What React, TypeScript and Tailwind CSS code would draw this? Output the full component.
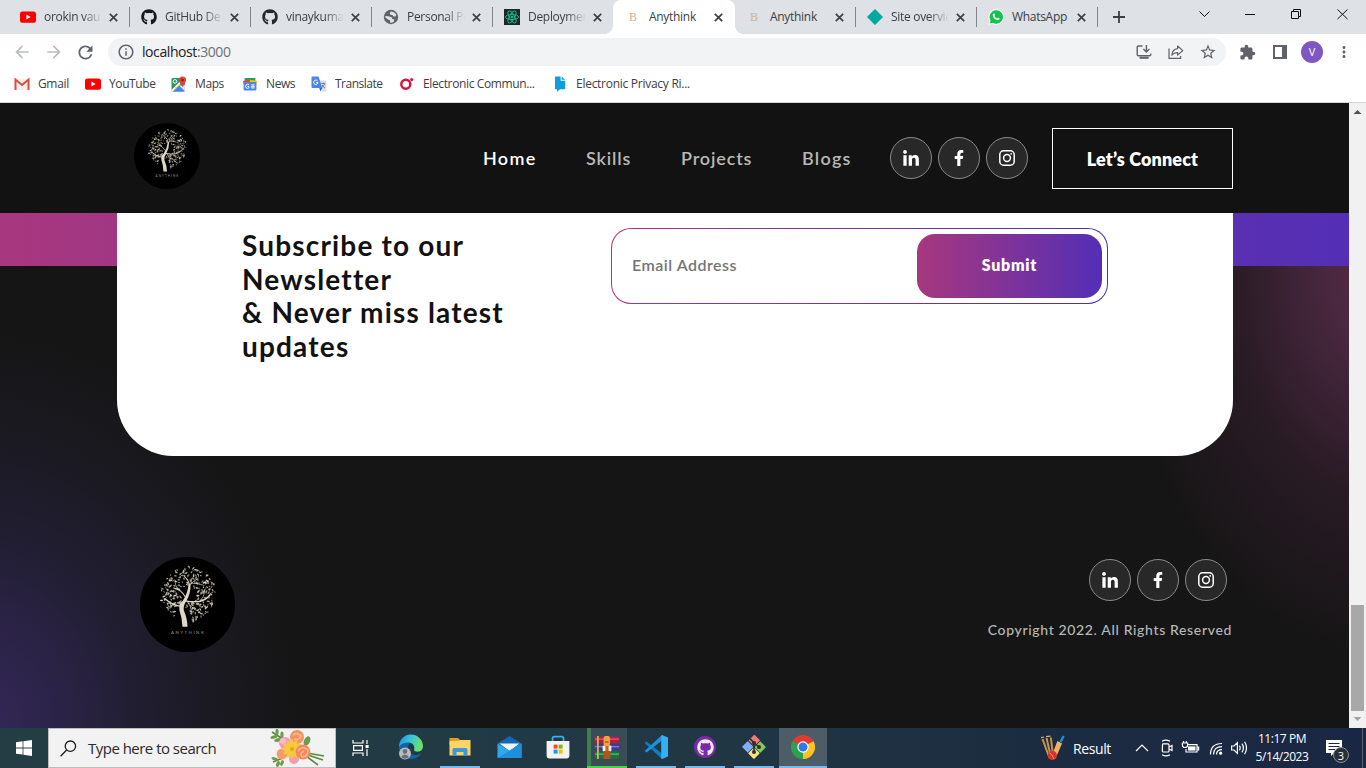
import React from "react";
import { FaGithub, FaLinkedinIn, FaFacebookF } from "react-icons/fa";
import {
  MdArrowBack,
  MdArrowForward,
  MdRefresh,
  MdInfoOutline,
  MdStarBorder,
  MdExtension,
  MdMoreVert,
} from "react-icons/md";

/* ---------- favicons and small brand marks ---------- */

const YouTubeIcon = () => (
  <svg width="16" height="16" viewBox="0 0 16 16">
    <rect x="0" y="2.4" width="16" height="11.4" rx="2.6" fill="#f00" />
    <path d="M6.4 5.6 L10.6 8.1 L6.4 10.6 Z" fill="#fff" />
  </svg>
);

const GlobeFavicon = () => (
  <svg width="16" height="16" viewBox="0 0 16 16">
    <circle cx="8" cy="8" r="7.2" fill="#5f6368" />
    <path d="M7.6 2.6 Q11 2.4 13.4 5.4 L12.6 7.4 H10.6 L9.4 6 L7.4 5.8 L6.8 4.4 Z" fill="#dee1e6" />
    <path d="M2.2 7 L5.4 7.2 L8.6 8.2 L9.4 10 L11.4 10.6 L10.6 13 Q8.6 14 7 13.6 L7.2 11.4 L5 10.6 L2.4 8.6 Z" fill="#dee1e6" />
  </svg>
);

const ReactFavicon = () => (
  <svg width="16" height="16" viewBox="0 0 16 16">
    <rect width="16" height="16" fill="#20232a" />
    <g fill="none" stroke="#12b886" strokeWidth="1">
      <ellipse cx="8" cy="8" rx="6.6" ry="2.6" />
      <ellipse cx="8" cy="8" rx="6.6" ry="2.6" transform="rotate(60 8 8)" />
      <ellipse cx="8" cy="8" rx="6.6" ry="2.6" transform="rotate(120 8 8)" />
    </g>
    <circle cx="8" cy="8" r="1.5" fill="#12b886" />
  </svg>
);

const LetterFavicon = () => (
  <span className="flex h-4 w-4 items-center justify-center font-['Liberation_Serif',serif] text-[12px] leading-none text-[#cfb58c]">
    B
  </span>
);

const DiamondFavicon = () => (
  <svg width="16" height="16" viewBox="0 0 16 16">
    <path d="M8 0.3 L15.7 8 L8 15.7 L0.3 8 Z" fill="#05a8a1" strokeLinejoin="round" stroke="#05a8a1" strokeWidth="0.6" />
  </svg>
);

const WhatsAppFavicon = () => (
  <svg width="16" height="16" viewBox="0 0 16 16">
    <path d="M0.3 15.8 L1.5 11.8 A7.8 7.8 0 1 1 4.4 14.7 Z" fill="#fff" />
    <path d="M1.6 14.6 L2.5 11.4 A6.7 6.7 0 1 1 4.8 13.7 Z" fill="#10c44c" />
    <path d="M5.5 4.4 L6.5 4.4 L7.1 6 L6.5 6.9 Q7.3 8.5 9.2 9.4 L10 8.6 L11.6 9.4 Q11.7 11 9.8 11.2 Q5.2 10.4 4.7 6 Q4.7 5 5.5 4.4 Z" fill="#fff" />
  </svg>
);

const GmailIcon = () => (
  <svg width="16" height="16" viewBox="0 0 16 16">
    <rect x="1" y="3" width="14" height="11" fill="#f3f0f0" />
    <path d="M1.5 14 V3.6 L8 9 L14.5 3.6 V14" fill="none" stroke="#dd4b3e" strokeWidth="2" />
  </svg>
);

const MapsIcon = () => (
  <svg width="16" height="16" viewBox="0 0 16 16">
    <rect x="0.5" y="2" width="13.5" height="13.5" rx="1.5" fill="#2a9d59" />
    <path d="M2 15.5 L8 9.5 L14 15.5 Z" fill="#4285f4" />
    <path d="M0.8 15 L13 3" stroke="#fff" strokeWidth="2" />
    <path d="M2 15.3 L12.5 4.8" stroke="#fbc02d" strokeWidth="0.9" />
    <path d="M8 9.4 L14 15.4 V9 Z" fill="#dfe3e8" />
    <circle cx="4" cy="5.4" r="1.8" fill="none" stroke="#fff" strokeWidth="1" />
    <path d="M11.5 0.4 A3.6 3.6 0 0 1 15.1 4 Q15.1 6 11.5 11 Q7.9 6 7.9 4 A3.6 3.6 0 0 1 11.5 0.4 Z" fill="#e24335" />
    <circle cx="11.5" cy="4" r="1.3" fill="#7f1f17" />
  </svg>
);

const NewsIcon = () => (
  <svg width="16" height="16" viewBox="0 0 16 16">
    <path d="M2.6 2 H13.4 V7 H2.6 Z" fill="#20a25b" />
    <path d="M0.8 5 L9 3.4 V9 H2 Z" fill="#ea4335" />
    <path d="M15.2 5 L8 3.8 V9 H14 Z" fill="#fbbc04" />
    <rect x="1.6" y="6" width="12.8" height="8.6" rx="1" fill="#4a86ee" />
    <path d="M7 8.9 A2 2 0 1 0 7 11.7 V10.5 H5.6 M9.2 8.9 H12.6 M9.2 10.4 H12.6 M9.2 11.9 H12.6" fill="none" stroke="#fff" strokeWidth="1" />
  </svg>
);

const TranslateIcon = () => (
  <svg width="16" height="16" viewBox="0 0 16 16">
    <path d="M6 4.5 H14.5 Q15.4 4.5 15.4 5.4 V14.4 Q15.4 15.4 14.4 15.4 H9.4 Z" fill="#dadce0" />
    <path d="M1.2 0.6 H7.6 L11.2 12 H1.6 Q0.5 12 0.5 11 V1.4 Q0.5 0.6 1.2 0.6 Z" fill="#4a86ee" />
    <path d="M8.4 12 H11.2 L9.4 15.2 Z" fill="#2a5dc8" />
    <path d="M6.6 5 A2.2 2.2 0 1 0 7 6.6 H5" fill="none" stroke="#fff" strokeWidth="1" />
    <path d="M10.2 7.6 H14.4 M12.3 6.6 V7.6 M13.6 7.8 Q13 10.4 10.8 11.6 M11.2 9 Q12 11 13.8 11.8" fill="none" stroke="#6b7785" strokeWidth="0.9" />
  </svg>
);

const RedRingIcon = () => (
  <svg width="16" height="16" viewBox="0 0 16 16">
    <circle cx="6.8" cy="8.2" r="4.5" fill="none" stroke="#d9123c" strokeWidth="2.5" />
    <circle cx="12.7" cy="3.6" r="1.6" fill="#d9123c" />
  </svg>
);

const BluePageIcon = () => (
  <svg width="16" height="16" viewBox="0 0 16 16">
    <path d="M3 0.4 H8.6 V4.8 H13.2 V13.2 H8 L5 15.8 V13.2 H3 Z" fill="#0d9edb" />
    <path d="M9.6 0.4 L13.2 3.8 H9.6 Z" fill="#0d9edb" />
  </svg>
);

/* ---------- browser chrome ---------- */

const CloseX = () => (
  <svg className="shrink-0" width="9" height="9" viewBox="0 0 9 9">
    <path d="M0.8 0.8 L8.2 8.2 M8.2 0.8 L0.8 8.2" stroke="#3c4043" strokeWidth="1.7" />
  </svg>
);

const tabs: { title: string; icon: React.ReactNode; active?: boolean; sep?: boolean; fade?: boolean }[] = [
  { title: "orokin vau", icon: <YouTubeIcon />, sep: true, fade: true },
  { title: "GitHub De", icon: <FaGithub size={16} color="#16191d" />, sep: true, fade: true },
  { title: "vinaykuma", icon: <FaGithub size={16} color="#24292f" />, sep: true, fade: true },
  { title: "Personal Po", icon: <GlobeFavicon />, sep: true, fade: true },
  { title: "Deploymen", icon: <ReactFavicon />, fade: true },
  { title: "Anythink", icon: <LetterFavicon />, active: true },
  { title: "Anythink", icon: <LetterFavicon />, sep: true },
  { title: "Site overvie", icon: <DiamondFavicon />, sep: true, fade: true },
  { title: "WhatsApp", icon: <WhatsAppFavicon />, sep: true },
];

const TabStrip = () => (
  <div className="flex h-[34px] shrink-0 bg-[#dee1e6] pl-2">
    {tabs.map((t, i) => (
      <div
        key={i}
        className={
          t.active
            ? "relative -mr-px flex h-[34px] w-[122px] shrink-0 items-center rounded-t-lg bg-white pl-3"
            : "relative flex h-[34px] w-[121px] shrink-0 items-center pl-3"
        }
      >
        <span className="flex w-4 shrink-0 justify-center">{t.icon}</span>
        <span
          className={
            t.fade
              ? "ml-2 w-[58px] whitespace-nowrap text-[12px] tracking-[-0.3px] text-[#3c4043] [mask-image:linear-gradient(to_right,#000_66%,transparent)]"
              : "ml-2 w-[58px] whitespace-nowrap text-[12px] tracking-[-0.3px] text-[#3c4043]"
          }
        >
          {t.title}
        </span>
        <span className="ml-[7px] flex">
          <CloseX />
        </span>
        {t.sep && <span className="absolute right-[-1px] top-[7px] h-5 w-px bg-[#80868b]" />}
        {t.active && (
          <>
            <span className="absolute bottom-0 left-[-8px] h-2 w-2 bg-[radial-gradient(circle_at_0_0,transparent_7.5px,#fff_8px)]" />
            <span className="absolute bottom-0 right-[-8px] h-2 w-2 bg-[radial-gradient(circle_at_100%_0,transparent_7.5px,#fff_8px)]" />
          </>
        )}
      </div>
    ))}
    <div className="flex flex-1 items-center pl-[16px]">
      <svg width="12" height="12" viewBox="0 0 12 12">
        <path d="M6 0 V12 M0 6 H12" stroke="#3c4043" strokeWidth="1.8" />
      </svg>
      <svg className="mb-[6px] ml-auto mr-[6px]" width="161" height="12" viewBox="0 0 161 12" fill="none" stroke="#111" strokeWidth="1">
        <path d="M0.5 3.5 L5.5 8.5 L10.5 3.5" />
        <path d="M46 6.5 H56" />
        <path d="M92.5 3.5 H99.5 V10.5 H92.5 Z M94.5 3.5 V1.5 H101.5 V8.5 H99.5" />
        <path d="M138.5 1.5 L148.5 11 M148.5 1.5 L138.5 11" />
      </svg>
    </div>
  </div>
);

const Toolbar = () => (
  <div className="flex h-9 shrink-0 items-center bg-white">
    <div className="flex w-[108px] items-center gap-3 pl-3">
      <MdArrowBack size={20} color="#babcbe" />
      <MdArrowForward size={20} color="#babcbe" />
      <MdRefresh size={21} color="#5f6368" className="-ml-px" />
    </div>
    <div className="flex h-7 w-[1118px] items-center rounded-full bg-[#f1f3f4] pl-[9px] pr-[9px]">
      <MdInfoOutline size={18} color="#5f6368" />
      <span className="-mt-px ml-[7px] text-[14px] tracking-[-0.42px] text-[#202124]">
        localhost<span className="text-[#6b7075]">:3000</span>
      </span>
      <div className="ml-auto flex items-center gap-4 text-[#5f6368]">
        <svg width="16" height="16" viewBox="0 0 16 16" fill="none" stroke="currentColor" strokeWidth="1.4">
          <path d="M6.5 2 H2.4 Q1.2 2 1.2 3.2 V10.6 Q1.2 11.8 2.4 11.8 H13.6 Q14.8 11.8 14.8 10.6 V9.4" />
          <path d="M10.4 1 V7.6 M7.4 5 L10.4 8 L13.4 5" />
          <path d="M3.6 13.8 H12.6" strokeWidth="2" />
        </svg>
        <svg width="16" height="16" viewBox="0 0 16 16" fill="none" stroke="currentColor" strokeWidth="1.2">
          <path d="M1 4.5 V14.4 H12.6 V12" />
          <path d="M9.6 2 L14.8 6.6 L9.6 11 V8.6 Q6 8.4 3.8 11.2 Q4.4 5.2 9.6 4.6 Z" strokeLinejoin="round" />
        </svg>
        <MdStarBorder size={18} className="-ml-[1px]" />
      </div>
    </div>
    <div className="flex items-center pl-[13px] text-[#5f6368]">
      <MdExtension size={17} />
      <svg className="ml-[17px]" width="14" height="14" viewBox="0 0 14 14">
        <path d="M0 0 H14 V14 H0 Z M2 2 V12 H9 V2 Z" fill="#5f6368" fillRule="evenodd" />
      </svg>
      <span className="ml-[14px] flex h-[22px] w-[22px] items-center justify-center rounded-full bg-[#7e57c2] text-[11px] text-white">V</span>
      <MdMoreVert size={18} className="ml-3" />
    </div>
  </div>
);

const bookmarks: { label: string; icon: React.ReactNode; cls: string }[] = [
  { label: "Gmail", icon: <GmailIcon />, cls: "w-[71px] tracking-[-0.35px]" },
  { label: "YouTube", icon: <YouTubeIcon />, cls: "w-[87px] tracking-[-0.4px]" },
  { label: "Maps", icon: <MapsIcon />, cls: "w-[70px] -ml-px mr-px tracking-[-0.4px]" },
  { label: "News", icon: <NewsIcon />, cls: "w-[69px] tracking-[-0.4px]" },
  { label: "Translate", icon: <TranslateIcon />, cls: "w-[88px] tracking-[-0.5px]" },
  { label: "Electronic Commun...", icon: <RedRingIcon />, cls: "w-[153px] tracking-[-0.37px]" },
  { label: "Electronic Privacy Ri...", icon: <BluePageIcon />, cls: "w-[153px] tracking-[-0.27px]" },
];

const BookmarksBar = () => (
  <div className="flex h-[33px] shrink-0 items-center border-b border-[#d5d7da] bg-white pb-1 pl-[14px]">
    {bookmarks.map((b) => (
      <div key={b.label} className={"flex shrink-0 items-center gap-2 whitespace-nowrap text-[12px] text-[#3c4043] " + b.cls}>
        {b.icon}
        <span>{b.label}</span>
      </div>
    ))}
  </div>
);

/* ---------- site ---------- */

const leaves = (() => {
  let seed = 11;
  const rnd = () => {
    seed = (seed * 16807) % 2147483647;
    return seed / 2147483647;
  };
  const out: { x: number; y: number; a: number; s: number; o: number }[] = [];
  /* golden-angle spread keeps the crown evenly filled */
  for (let k = 30; k < 300; k++) {
    const ang = k * 2.39996 + rnd() * 0.5;
    const r = Math.sqrt(k / 300) * 80 + (rnd() - 0.5) * 6;
    const x = 143 + Math.cos(ang) * r;
    const y = 110 + Math.sin(ang) * r;
    if (y > 150 && x > 104 && x < 150) continue;
    out.push({ x, y, a: rnd() * 180, s: 1.5 + rnd() * 1.5, o: 0.5 + rnd() * 0.45 });
  }
  return out;
})();

const TreeLogo = ({ size }: { size: number }) => (
  <svg width={size} height={size} viewBox="0 0 282 282" className="shrink-0">
    <circle cx="141" cy="141" r="141" fill="#000" />
    <g fill="#e0d7c5">
      {leaves.map((l, i) => (
        <ellipse key={i} cx={l.x} cy={l.y} rx={l.s * 1.7} ry={l.s * 0.85} opacity={l.o} transform={`rotate(${l.a} ${l.x} ${l.y})`} />
      ))}
      <path d="M126 207 Q125 180 117 158 Q114 140 127 130 Q142 108 144 82 L150 82 Q151 108 138 130 Q128 144 130 158 Q141 184 141 207 Z" />
    </g>
    <g fill="none" stroke="#e0d7c5" strokeLinecap="round">
      <path d="M147 84 Q145 68 132 58" strokeWidth="3" />
      <path d="M148 84 Q156 72 172 64" strokeWidth="2.4" />
      <path d="M119 146 Q98 144 74 124" strokeWidth="4" />
      <path d="M134 118 Q124 98 100 92" strokeWidth="3" />
      <path d="M134 130 Q156 134 176 132 Q196 128 208 112" strokeWidth="4" />
      <path d="M140 132 Q150 152 176 162 M148 142 Q154 156 152 168" strokeWidth="2.2" />
      <path d="M180 130 Q188 118 192 106 M98 142 Q88 146 80 150 M112 94 Q104 84 104 74 M150 78 Q168 76 190 84" strokeWidth="1.8" />
    </g>
    <text x="143" y="229" textAnchor="middle" fill="#9d968a" fontSize="13" letterSpacing="4.4" fontFamily="Lato, sans-serif">
      ANYTHINK
    </text>
  </svg>
);

const InstagramGlyph = () => (
  <svg width="16" height="16" viewBox="0 0 16 16" fill="none" stroke="#fff" strokeWidth="1.5">
    <rect x="0.8" y="0.8" width="14.4" height="14.4" rx="3.8" />
    <circle cx="8" cy="8" r="3.4" />
    <circle cx="12.2" cy="3.8" r="0.9" fill="#fff" stroke="none" />
  </svg>
);

const Socials = () => (
  <div className="flex gap-[6px]">
    <a className="flex h-[42px] w-[42px] items-center justify-center rounded-full border border-[#8a8a8a] bg-[#282828]">
      <FaLinkedinIn size={18} color="#fff" className="mt-px" />
    </a>
    <a className="flex h-[42px] w-[42px] items-center justify-center rounded-full border border-[#8a8a8a] bg-[#282828]">
      <FaFacebookF size={16} color="#fff" />
    </a>
    <a className="flex h-[42px] w-[42px] items-center justify-center rounded-full border border-[#8a8a8a] bg-[#282828]">
      <InstagramGlyph />
    </a>
  </div>
);

const SiteHeader = () => (
  <header className="flex h-[110px] items-center bg-[#121212] pl-[134px] pr-[116px] font-['Lato',sans-serif]">
    <div className="-mt-1">
      <TreeLogo size={66} />
    </div>
    <nav className="ml-[283px] flex h-[30px] items-center whitespace-nowrap text-[18px] font-semibold tracking-[0.85px] text-[#b8b8b8]">
      <a className="w-[103px] tracking-[1.3px] text-white">Home</a>
      <a className="w-[95px]">Skills</a>
      <a className="w-[121px]">Projects</a>
      <a className="w-[88px] tracking-[1.25px]">Blogs</a>
    </nav>
    <Socials />
    <button className="ml-6 h-[61px] w-[181px] border border-white pt-0.5 text-[18px] font-extrabold tracking-[0.15px] text-white">Let’s Connect</button>
  </header>
);

const Page = () => (
  <div className="flex min-w-0 flex-1 flex-col overflow-hidden font-['Lato',sans-serif]">
    <SiteHeader />
    <main className="flex flex-1 flex-col bg-[#151515] bg-[linear-gradient(90deg,#a8377e,#532fb6),radial-gradient(ellipse_320px_400px_at_-20px_515px,#33285a_0%,#2b2346_26%,#211e32_48%,#1b1a22_72%,#151515_100%),radial-gradient(ellipse_270px_390px_at_1385px_60px,#552c46_0%,#4a2840_20%,#281b24_58%,rgba(21,21,21,0)_100%)] bg-[length:100%_53px,320px_100%,100%_100%] bg-no-repeat px-[117px]">
      <section className="flex h-[243px] w-[1116px] shrink-0 items-start rounded-b-[56px] bg-white pl-[125px] pt-[15px]">
        <h3 className="w-[369px] whitespace-nowrap pt-px text-[28px] font-bold leading-[33.6px] tracking-[1.17px] text-[#121212]">
          Subscribe to our
          <br />
          Newsletter
          <br />
          &amp; Never miss latest
          <br />
          updates
        </h3>
        <div className="h-[76px] w-[497px] rounded-[20px] bg-[linear-gradient(90deg,#aa367c,#4a2fbd)] p-px">
          <form className="flex h-full items-center rounded-[19px] bg-white pl-5 pr-[5px]">
            <input
              className="-mt-0.5 w-[285px] bg-transparent text-[16px] font-semibold tracking-[0.5px] text-[#121212] outline-none placeholder:text-[#757575]"
              placeholder="Email Address"
            />
            <button
              type="button"
              className="h-16 w-[185px] rounded-[18px] bg-[linear-gradient(90deg,#a8377e,#532fb6)] pb-0.5 text-[16px] font-extrabold tracking-[0.7px] text-white"
            >
              Submit
            </button>
          </form>
        </div>
      </section>
      <footer className="flex items-start justify-between pt-[101px]">
        <div className="ml-[23px]">
          <TreeLogo size={95} />
        </div>
        <div className="flex flex-col items-end pt-[2px]">
          <div className="mr-[5px]">
            <Socials />
          </div>
          <p className="mt-[19px] whitespace-nowrap text-[14px] font-medium leading-5 tracking-[0.65px] text-[#b8b8b8]">
            Copyright 2022. All Rights Reserved
          </p>
        </div>
      </footer>
    </main>
  </div>
);

const Scrollbar = () => (
  <div className="flex w-[17px] shrink-0 flex-col items-center bg-[#f1f1f1]">
    <svg width="17" height="17" viewBox="0 0 17 17">
      <path d="M4.5 11 L8.5 7 L12.5 11 Z" fill="#505050" />
    </svg>
    <div className="mt-auto h-[106px] w-[13px] bg-[#a8a8a8]" />
    <svg width="17" height="17" viewBox="0 0 17 17">
      <path d="M4.5 6 L8.5 10 L12.5 6 Z" fill="#a3a3a3" />
    </svg>
  </div>
);

/* ---------- taskbar ---------- */

const FlowersArt = () => (
  <svg width="56" height="38" viewBox="0 0 56 38">
    <g stroke="#5b8a3c" strokeWidth="1.6" fill="none">
      <path d="M2 3 L16 12 M38 26 L53 31 M37 24 L54 27 M36 27 L48 36 M3 33 L15 28" />
    </g>
    <g fill="#6f9b4c">
      <ellipse cx="4" cy="8" rx="3.6" ry="1.6" transform="rotate(-15 4 8)" />
      <ellipse cx="7" cy="3" rx="1.6" ry="3.4" />
      <ellipse cx="8" cy="11" rx="3.8" ry="1.7" transform="rotate(-15 8 11)" />
      <ellipse cx="12" cy="6" rx="1.6" ry="3.4" />
      <ellipse cx="5" cy="30" rx="3.6" ry="1.6" transform="rotate(20 5 30)" />
      <ellipse cx="8" cy="35" rx="1.8" ry="3" transform="rotate(20 8 35)" />
      <ellipse cx="12" cy="34" rx="1.6" ry="3" transform="rotate(20 12 34)" />
      <ellipse cx="37" cy="12" rx="3" ry="5" transform="rotate(25 37 12)" />
    </g>
    <circle cx="15" cy="14" r="6" fill="#f49ab5" />
    <circle cx="13" cy="12" r="3" fill="#fabccd" />
    <circle cx="27" cy="8" r="7" fill="#f5925f" />
    <path d="M23 6 Q27 3 31 7 Q29 12 24 10" fill="none" stroke="#fbb68d" strokeWidth="1.8" />
    <circle cx="12" cy="25" r="5.4" fill="#f79a6c" />
    <circle cx="24" cy="30" r="5" fill="#f49ab5" />
    <g fill="#f7c93d">
      <ellipse cx="22" cy="20" rx="10" ry="2.4" />
      <ellipse cx="22" cy="20" rx="10" ry="2.4" transform="rotate(30 22 20)" />
      <ellipse cx="22" cy="20" rx="10" ry="2.4" transform="rotate(60 22 20)" />
      <ellipse cx="22" cy="20" rx="10" ry="2.4" transform="rotate(90 22 20)" />
      <ellipse cx="22" cy="20" rx="10" ry="2.4" transform="rotate(120 22 20)" />
      <ellipse cx="22" cy="20" rx="10" ry="2.4" transform="rotate(150 22 20)" />
    </g>
    <circle cx="22" cy="20" r="2" fill="#dfa522" />
    <circle cx="33" cy="23" r="7.4" fill="#f5875a" />
    <path d="M28 22 Q32 16 38 21 Q38 28 32 28 Q29 24 34 22" fill="none" stroke="#fbb992" strokeWidth="1.6" />
  </svg>
);

const TaskViewIcon = () => (
  <svg width="18" height="18" viewBox="0 0 18 18" fill="none" stroke="#fff" strokeWidth="1.2">
    <path d="M1 1 V4 H11 V1 M1 17 V14 H11 V17 M1.6 6.6 H10.4 V11.4 H1.6 Z M15 1 V5 M15 10 V17" />
    <rect x="13.6" y="6" width="3" height="3" fill="#fff" stroke="none" />
  </svg>
);

const EdgeIcon = () => (
  <svg width="26" height="26" viewBox="0 0 26 26">
    <defs>
      <linearGradient id="edgeTop" x1="0" y1="0" x2="1" y2="0.3">
        <stop offset="0" stopColor="#1b8fd6" />
        <stop offset="0.5" stopColor="#36c3dc" />
        <stop offset="1" stopColor="#6be06a" />
      </linearGradient>
    </defs>
    <path d="M1 13 Q5 6 12 8.6 Q9 12 10.6 16.6 Q13.6 21.8 19 21 Q22 20.6 23.8 18.6 Q20 25.4 13 25 A12 12 0 0 1 1 13 Z" fill="#1263ad" />
    <path d="M1 13 A12 12 0 0 1 25 12 Q25 18 18.5 17.6 Q15 17 16.4 14 Q16 9 10.5 8.6 Q4 8.6 1 13 Z" fill="url(#edgeTop)" />
    <circle cx="7" cy="19.4" r="6" fill="#b9bcc0" />
    <circle cx="7" cy="17.4" r="2.3" fill="#6d6f73" />
    <path d="M3 23 Q7 18.2 11 23 Q7 26.4 3 23 Z" fill="#6d6f73" />
  </svg>
);

const ExplorerIcon = () => (
  <svg width="22" height="20" viewBox="0 0 22 20">
    <path d="M0.5 1 H9 L11 3 H21 V8 H0.5 Z" fill="#e0a21c" />
    <path d="M0.5 4 H8.5 L10.5 3 H21.5 V18.5 H0.5 Z" fill="#fbd465" />
    <path d="M3.5 19 V12.5 Q3.5 11 5 11 H17 Q18.5 11 18.5 12.5 V19 H14.5 V15 H7.5 V19 Z" fill="#3f97d8" />
  </svg>
);

const MailIcon = () => (
  <svg width="25" height="24" viewBox="0 0 25 24">
    <path d="M0.5 8.5 L12.5 1 L24.5 8.5 L12.5 16 Z" fill="#1267b8" />
    <path d="M2.5 8.5 H22.5 L12.5 16 Z" fill="#f1f4f7" />
    <path d="M0.5 8.5 L12.5 15.5 L24.5 8.5 V23 H0.5 Z" fill="#2fa8ea" />
    <path d="M0.5 23 L24.5 8.5 V23 Z" fill="#1f8fdc" />
  </svg>
);

const StoreIcon = () => (
  <svg width="24" height="24" viewBox="0 0 24 24">
    <path d="M6.5 7 V3.4 Q6.5 1.6 8.3 1.6 H15.7 Q17.5 1.6 17.5 3.4 V7" fill="none" stroke="#2fb4ec" strokeWidth="1.7" />
    <path d="M0.6 6 H23.4 V20.6 Q23.4 23.6 20.4 23.6 H3.6 Q0.6 23.6 0.6 20.6 Z" fill="#f3f3f3" />
    <rect x="7.6" y="9.6" width="4" height="4" fill="#f25022" />
    <rect x="12.6" y="9.6" width="4" height="4" fill="#7fba00" />
    <rect x="7.6" y="14.6" width="4" height="4" fill="#00a4ef" />
    <rect x="12.6" y="14.6" width="4" height="4" fill="#ffb900" />
  </svg>
);

const WinRarIcon = () => (
  <svg width="24" height="23" viewBox="0 0 24 23">
    <rect y="0.5" width="24" height="7" rx="1" fill="#b01f45" />
    <rect y="2.4" width="24" height="1.4" fill="#e0557a" />
    <rect y="8.3" width="24" height="6.4" rx="1" fill="#3f3d92" />
    <rect y="10" width="24" height="1.3" fill="#7f7ed6" />
    <rect y="15.5" width="24" height="7" rx="1" fill="#17763a" />
    <rect y="17.4" width="24" height="1.4" fill="#4fb472" />
    <rect x="2" width="1.8" height="23" fill="#d8b23e" />
    <rect x="7.6" y="9.6" width="8.8" height="6" rx="1" fill="#f1f1f1" />
    <rect x="8.6" y="0" width="6.4" height="10" rx="2" fill="#eda637" />
    <rect x="10" y="5" width="3.6" height="2" fill="#c46d1c" />
    <rect x="10.4" y="10" width="3.2" height="5" fill="#c9651f" />
    <rect x="8.6" y="15" width="6.8" height="8" fill="#b4521e" />
  </svg>
);

const VSCodeIcon = () => (
  <svg width="24" height="24" viewBox="0 0 24 24">
    <path d="M0.6 8 L2.6 6.6 L18 18.4 V24 Z" fill="#0c7dc4" />
    <path d="M0.6 16 L2.6 17.4 L18 5.6 V0 Z" fill="#1b93dc" />
    <path d="M18 0 L24 2.6 V21.4 L18 24 Q17.2 23.6 17.2 22.6 V1.4 Q17.2 0.4 18 0 Z" fill="#30b0f5" />
  </svg>
);

const GitHubDesktopIcon = () => (
  <span className="flex h-[22px] w-[22px] items-center justify-center rounded-full bg-[#7a2aa8]">
    <FaGithub size={17} color="#f2eafa" />
  </span>
);

const GitIcon = () => (
  <svg width="24" height="24" viewBox="0 0 24 24">
    <rect x="7.9" y="1.2" width="8.2" height="8.2" rx="0.6" transform="rotate(45 12 5.8)" fill="#f27878" />
    <rect x="1.6" y="7.9" width="8.2" height="8.2" rx="0.6" transform="rotate(45 5.8 12)" fill="#80aef8" />
    <rect x="14.2" y="7.9" width="8.2" height="8.2" rx="0.6" transform="rotate(45 18.2 12)" fill="#86c75a" />
    <rect x="7.9" y="14.2" width="8.2" height="8.2" rx="0.6" transform="rotate(45 12 18.2)" fill="#fbe27c" />
    <path d="M8 3.5 L12 8 V17 M12 8 L17 12" stroke="#2a2f33" strokeWidth="1.6" fill="none" />
    <g fill="#2a2f33">
      <circle cx="12" cy="8" r="2" />
      <circle cx="12" cy="17" r="2" />
      <circle cx="17" cy="12" r="2" />
    </g>
  </svg>
);

const ChromeIcon = () => (
  <svg width="24" height="24" viewBox="0 0 24 24">
    <path d="M12 12 L1.6 6 A12 12 0 0 1 22.4 6 Z" fill="#e23b2e" />
    <path d="M12 12 L22.4 6 A12 12 0 0 1 12 24 Z" fill="#fcc31e" />
    <path d="M12 12 L12 24 A12 12 0 0 1 1.6 6 Z" fill="#2da14c" />
    <path d="M12 6.5 H22.6 L22.4 6 L12 5 Z" fill="#e23b2e" />
    <path d="M16.8 14.7 L11.6 24 H12.4 Q17 18 16.8 14.7 Z" fill="#fcc31e" />
    <circle cx="12" cy="12" r="5.7" fill="#fff" />
    <circle cx="12" cy="12" r="4.5" fill="#2f78ee" />
  </svg>
);

const CricketIcon = () => (
  <svg width="26" height="26" viewBox="0 0 26 26">
    <path d="M2.5 4 L9.5 23 M6.5 3 L11 22 M10.8 2.5 L13 20" stroke="#c9954b" strokeWidth="2" />
    <path d="M1 2.6 L4 2 M6 1.6 L10.5 1.2" stroke="#d9b077" strokeWidth="1.2" />
    <path d="M23.6 1 L20.6 7" stroke="#2089e0" strokeWidth="2.4" />
    <path d="M17.4 6 L22 8.6 L16.6 21 Q13.6 22.6 12.2 19.4 Z" fill="#eeb36a" />
    <circle cx="12.4" cy="20.4" r="4.6" fill="#d8352a" />
    <path d="M9.4 17.6 Q12.6 20 14 24" stroke="#f29a90" strokeWidth="0.8" fill="none" />
  </svg>
);

const apps: { icon: React.ReactNode; cls: string }[] = [
  { icon: <EdgeIcon />, cls: "border-transparent" },
  { icon: <ExplorerIcon />, cls: "border-[#76b9ed]" },
  { icon: <MailIcon />, cls: "border-transparent" },
  { icon: <StoreIcon />, cls: "border-transparent" },
  { icon: <WinRarIcon />, cls: "border-[#3fd93c] bg-[linear-gradient(90deg,#3f7d4c_4px,#3a4c56_4px)]" },
  { icon: <VSCodeIcon />, cls: "border-[#76b9ed]" },
  { icon: <GitHubDesktopIcon />, cls: "border-[#76b9ed]" },
  { icon: <GitIcon />, cls: "border-[#76b9ed]" },
];

const Taskbar = () => (
  <div className="flex h-10 shrink-0 items-center bg-[linear-gradient(90deg,#243d45_0%,#213844_50%,#1c2c40_75%,#1a2744_100%)] text-white">
    <div className="flex w-12 justify-center">
      <svg width="16" height="16" viewBox="0 0 16 16" fill="#fff">
        <path d="M0 2.2 L6.6 1.3 V7.5 H0 Z M7.4 1.2 L16 0 V7.5 H7.4 Z M0 8.4 H6.6 V14.6 L0 13.7 Z M7.4 8.4 H16 V16 L7.4 14.8 Z" />
      </svg>
    </div>
    <div className="flex h-10 w-72 items-center border border-[#bdbdbd] bg-[#f2f2f2] pl-[11px]">
      <svg width="17" height="17" viewBox="0 0 17 17" fill="none" stroke="#1c1c1c" strokeWidth="1.3">
        <circle cx="10.4" cy="6.2" r="5.2" />
        <path d="M6.6 10 L0.6 16.2" />
      </svg>
      <span className="ml-[11px] whitespace-nowrap text-[15px] tracking-[-0.52px] text-[#2b2b2b]">Type here to search</span>
      <span className="ml-auto mr-[9px] flex">
        <FlowersArt />
      </span>
    </div>
    <div className="ml-[5px] mr-[10px] flex w-10 justify-center">
      <TaskViewIcon />
    </div>
    <div className="flex gap-[9px]">
      {apps.map((a, i) => (
        <div key={i} className={"flex h-10 w-10 items-center justify-center border-b-2 " + a.cls}>
          {a.icon}
        </div>
      ))}
      <div className="-ml-1 flex h-10 w-12 items-center justify-center border-b-2 border-[#76b9ed] bg-[#4c5d68]">
        <ChromeIcon />
      </div>
    </div>
    <div className="ml-auto flex h-10 items-center">
      <CricketIcon />
      <span className="ml-[7px] w-[62px] text-[14px] tracking-[-0.4px]">Result</span>
      <svg width="114" height="20" viewBox="0 0 114 20" fill="none" stroke="#fff" strokeWidth="1.2">
        <path d="M1 13 L7 7 L13 13" />
        <path d="M27.5 6.6 Q27.5 5.8 28.3 5.8 H33 Q34 5.8 34 6.8 V13 Q34 14 33 14 H28.3 Q27.3 14 27.3 13 Z M34 9 L37 7.5 V12.5 L34 11 M27 3.2 Q31 1 35 3.2 M27 16.8 Q31 19 35 16.8" />
        <path d="M52 6.6 H62 V14 H51 V11 M62 9 H63.6 V12 H62 M48.6 3 V5 M51.4 3 V5 M47.4 5 H52.6 V7 Q52.6 9.5 50 9.5 Q47.4 9.5 47.4 7 Z" />
        <rect x="53" y="8.4" width="7.5" height="4.2" fill="#fff" stroke="none" />
        <path d="M75.5 16.5 Q75.5 5.5 87 5.5 M78.5 16.5 Q78.5 8.6 87 8.6 M81.5 16.5 Q81.5 11.6 87 11.6" />
        <circle cx="85.6" cy="15.2" r="1.6" fill="#fff" stroke="none" />
        <path d="M96.6 8 H99 L102.4 4.6 V15.4 L99 12 H96.6 Z M104.4 7.6 Q106 10 104.4 12.4 M107 5.6 Q109.8 10 107 14.4 M109.6 3.8 Q113.4 10 109.6 16.2" />
      </svg>
      <div className="ml-[4px] w-[58px] whitespace-nowrap text-center text-[12px] leading-[18px] tracking-[-0.45px]">
        <div>11:17 PM</div>
        <div>5/14/2023</div>
      </div>
      <div className="relative ml-[15px] flex w-[36px]">
        <svg width="16" height="16" viewBox="0 0 16 16">
          <path d="M0 0 H16 V13 H8 L5 16 V13 H0 Z" fill="#fff" />
          <path d="M2.5 3.5 H13.5 M2.5 6.5 H13.5 M2.5 9.5 H9" stroke="#1a2744" strokeWidth="1.1" />
        </svg>
        <span className="absolute left-[7px] top-[7px] flex h-4 w-4 items-center justify-center rounded-full border border-[#8a8f96] bg-[#2b3036] text-[11px] leading-none">
          3
        </span>
      </div>
      <div className="mr-[3px] h-10 w-px bg-[#59636f]" />
    </div>
  </div>
);

export default function App() {
  return (
    <div className="flex h-[768px] w-[1366px] flex-col overflow-hidden bg-white font-['Open_Sans',sans-serif]">
      <TabStrip />
      <Toolbar />
      <BookmarksBar />
      <div className="flex min-h-0 flex-1">
        <Page />
        <Scrollbar />
      </div>
      <Taskbar />
    </div>
  );
}
